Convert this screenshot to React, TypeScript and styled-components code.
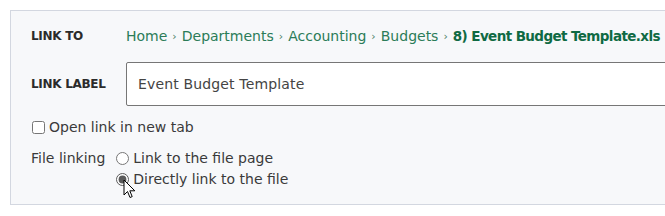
import styled, { createGlobalStyle } from "styled-components";

const GlobalStyle = createGlobalStyle`
  html, body {
    margin: 0;
    padding: 0;
    background: #ffffff;
    overflow: hidden;
  }
  body {
    font-family: "DejaVu Sans", "Open Sans", sans-serif;
    color: #3a3a3a;
  }
`;

const Panel = styled.div`
  position: relative;
  margin: 10px 0 0 10px;
  width: 720px;
  box-sizing: border-box;
  background: #f7f8fa;
  border: 1px solid #d3d7e0;
  padding: 15px 20px 15px 20px;
`;

const FieldRow = styled.div<{ $gap?: number }>`
  display: grid;
  grid-template-columns: 95px 1fr;
  align-items: center;
  margin-top: ${(p) => p.$gap ?? 0}px;
`;

const FieldLabel = styled.span`
  font-size: 12px;
  font-weight: 700;
  letter-spacing: -0.3px;
  color: #2b2b2b;
  text-transform: uppercase;
`;

const Crumbs = styled.div`
  display: flex;
  align-items: center;
  gap: 5px;
  height: 20px;
  font-size: 14px;
  white-space: nowrap;
`;

const Crumb = styled.span<{ $current?: boolean }>`
  color: ${(p) => (p.$current ? "#0f6a43" : "#2b7c58")};
  font-weight: ${(p) => (p.$current ? 700 : 400)};
  font-size: ${(p) => (p.$current ? "13.5px" : "14px")};
  letter-spacing: ${(p) => (p.$current ? "-0.6px" : "0")};
`;

const Sep = styled.span`
  color: #4b7f66;
  font-size: 11px;
`;

const TextInput = styled.input`
  box-sizing: border-box;
  height: 44px;
  width: 100%;
  border: 1px solid #767676;
  border-radius: 2px;
  background: #ffffff;
  padding: 0 11px;
  font-family: inherit;
  font-size: 14px;
  letter-spacing: 0.15px;
  color: #444;
  outline: none;
`;

const OptionLine = styled.label<{ $gap?: number }>`
  display: flex;
  align-items: center;
  gap: 4px;
  height: 20px;
  margin-top: ${(p) => p.$gap ?? 0}px;
  font-size: 14px;
  color: #3a3a3a;
`;

const CheckBox = styled.input`
  margin: 0 0 0 1px;
  width: 13px;
  height: 13px;
`;

const LinkingRow = styled.div`
  display: flex;
  align-items: flex-start;
  gap: 11px;
  margin-top: 11px;
`;

const LinkingLabel = styled.span`
  font-size: 14px;
  line-height: 20px;
`;

const RadioStack = styled.div`
  display: flex;
  flex-direction: column;
  gap: 1px;
`;

const Radio = styled.input`
  margin: 0;
  width: 13px;
  height: 13px;
  accent-color: #5a5a5a;
`;

const Pointer = styled.svg`
  position: absolute;
  left: 112px;
  top: 168px;
  pointer-events: none;
`;

export default function App() {
  const path = ["Home", "Departments", "Accounting", "Budgets"];
  return (
    <>
      <GlobalStyle />
      <Panel>
        <FieldRow>
          <FieldLabel>Link to</FieldLabel>
          <Crumbs>
            {path.map((p) => (
              <span key={p} style={{ display: "contents" }}>
                <Crumb>{p}</Crumb>
                <Sep>›</Sep>
              </span>
            ))}
            <Crumb $current>8) Event Budget Template.xls</Crumb>
          </Crumbs>
        </FieldRow>
        <FieldRow $gap={16}>
          <FieldLabel>Link label</FieldLabel>
          <TextInput defaultValue="Event Budget Template" />
        </FieldRow>
        <OptionLine $gap={11}>
          <CheckBox type="checkbox" />
          Open link in new tab
        </OptionLine>
        <LinkingRow>
          <LinkingLabel>File linking</LinkingLabel>
          <RadioStack>
            <OptionLine>
              <Radio type="radio" name="linking" />
              Link to the file page
            </OptionLine>
            <OptionLine>
              <Radio type="radio" name="linking" defaultChecked />
              Directly link to the file
            </OptionLine>
          </RadioStack>
        </LinkingRow>
        <Pointer width="14" height="21" viewBox="0 0 14 21">
          <path
            d="M1 1 L1 16 L4.5 12.5 L7 18.5 L9.2 17.6 L6.8 11.8 L11.8 11.8 Z"
            fill="#ffffff"
            stroke="#000000"
            strokeWidth="1"
            strokeLinejoin="round"
          />
        </Pointer>
      </Panel>
    </>
  );
}
